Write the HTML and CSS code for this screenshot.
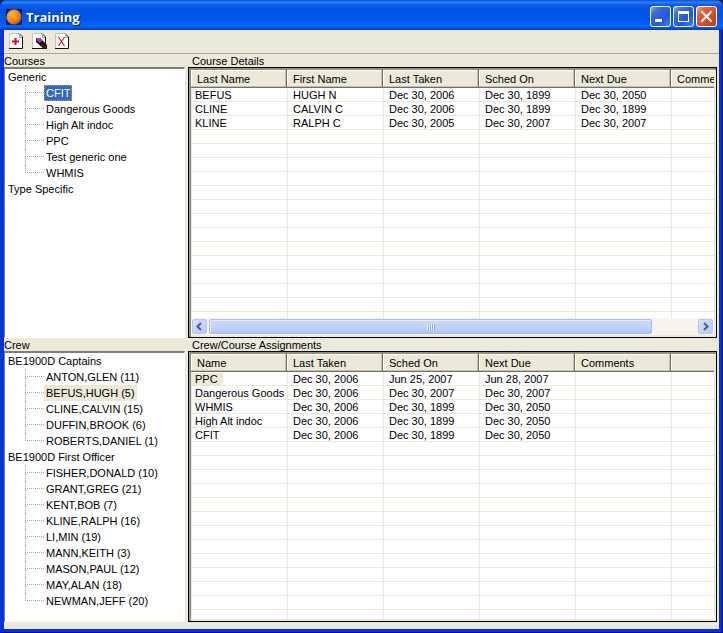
FILE: index.html
```html
<!DOCTYPE html>
<html lang="en">
<head>
    <meta charset="UTF-8">
    <meta name="viewport" content="width=device-width, initial-scale=1.0">
    <title>Training</title>
    <link rel="stylesheet" href="styles.css">
</head>
<body>
    <div class="window">
        <header class="titlebar">
            <svg class="app-icon" width="16" height="16" viewBox="0 0 16 16">
                <defs>
                    <radialGradient id="sun" cx="0.35" cy="0.35" r="0.7">
                        <stop offset="0" stop-color="#ffb92e"/>
                        <stop offset="0.6" stop-color="#f58a12"/>
                        <stop offset="1" stop-color="#c8500a"/>
                    </radialGradient>
                </defs>
                <rect width="16" height="16" fill="#0a1a86"/>
                <circle cx="8" cy="8" r="7.500" fill="url(#sun)"/>
            </svg>
            <h1>Training</h1>
            <div class="window-buttons">
                <button type="button" class="win-btn" aria-label="Minimize">
                    <svg width="19" height="19" viewBox="0 0 19 19"><rect x="4" y="12" width="7" height="3" fill="#fff"/></svg>
                </button>
                <button type="button" class="win-btn" aria-label="Maximize">
                    <svg width="19" height="19" viewBox="0 0 19 19"><path d="M4 4h11v11H4zM5 7v7h9V7z" fill="#fff" fill-rule="evenodd"/></svg>
                </button>
                <button type="button" class="win-btn close" aria-label="Close">
                    <svg width="19" height="19" viewBox="0 0 19 19"><path d="M5 5l9 9M14 5l-9 9" stroke="#fff" stroke-width="2" stroke-linecap="square"/></svg>
                </button>
            </div>
        </header>

        <div class="client">
            <div class="toolbar">
                <button type="button" class="tool" aria-label="Add">
                    <svg width="15" height="17" viewBox="0 0 15 17">
                        <path d="M0 0h10l4 4v12H0z" fill="#fff"/>
                        <path d="M0.500 16V0.500H10" fill="none" stroke="#c8c5b6"/>
                        <path d="M10 0.500L13.500 4V15.500H0" fill="none" stroke="#111"/>
                        <path d="M10.500 1v3.500H13" fill="none" stroke="#aca899"/>
                        <path d="M6.500 5v7M3 8.500h7" stroke="#e01010" stroke-width="2"/>
                    </svg>
                </button>
                <button type="button" class="tool" aria-label="Edit">
                    <svg width="15" height="17" viewBox="0 0 15 17">
                        <path d="M0 0h10l4 4v12H0z" fill="#fff"/>
                        <path d="M0.500 16V0.500H10" fill="none" stroke="#c8c5b6"/>
                        <path d="M10 0.500L13.500 4V15.500H0" fill="none" stroke="#111"/>
                        <path d="M10.500 1v3.500H13" fill="none" stroke="#aca899"/>
                        <path d="M4 5h4l7 7v4h-3L4 9z" fill="#220c10"/>
                        <path d="M5 5h3l2 2-2 3-4-3z" fill="#a838c8"/>
                        <path d="M9 10l5 5" stroke="#7c2a20"/>
                    </svg>
                </button>
                <button type="button" class="tool" aria-label="Delete">
                    <svg width="15" height="17" viewBox="0 0 15 17">
                        <path d="M0 0h10l4 4v12H0z" fill="#fff"/>
                        <path d="M0.500 16V0.500H10" fill="none" stroke="#c8c5b6"/>
                        <path d="M10 0.500L13.500 4V15.500H0" fill="none" stroke="#111"/>
                        <path d="M10.500 1v3.500H13" fill="none" stroke="#aca899"/>
                        <path d="M3.500 4l6 9M9.500 4l-6 9" stroke="#d82020" stroke-width="1.200"/>
                    </svg>
                </button>
            </div>

            <main class="panes">
                <section class="pane">
                    <h2>Courses</h2>
                    <div class="tree-box">
                        <ul class="tree">
                            <li>Generic
                                <ul>
                                    <li><span class="selected">CFIT</span></li>
                                    <li><span>Dangerous Goods</span></li>
                                    <li><span>High Alt indoc</span></li>
                                    <li><span>PPC</span></li>
                                    <li><span>Test generic one</span></li>
                                    <li><span>WHMIS</span></li>
                                </ul>
                            </li>
                            <li>Type Specific</li>
                        </ul>
                    </div>
                </section>

                <section class="pane detail">
                    <h2>Course Details</h2>
                    <div class="list-box">
                        <div class="list">
                            <table>
                                <thead>
                                    <tr><th>Last Name</th><th>First Name</th><th>Last Taken</th><th>Sched On</th><th>Next Due</th><th>Comments</th></tr>
                                </thead>
                                <tbody>
                                    <tr><td>BEFUS</td><td>HUGH N</td><td>Dec 30, 2006</td><td>Dec 30, 1899</td><td>Dec 30, 2050</td><td></td></tr>
                                    <tr><td>CLINE</td><td>CALVIN C</td><td>Dec 30, 2006</td><td>Dec 30, 1899</td><td>Dec 30, 1899</td><td></td></tr>
                                    <tr><td>KLINE</td><td>RALPH C</td><td>Dec 30, 2005</td><td>Dec 30, 2007</td><td>Dec 30, 2007</td><td></td></tr>
                                </tbody>
                            </table>
                        </div>
                        <div class="scrollbar">
                            <button type="button" class="arrow" aria-label="Scroll left">
                                <svg width="13" height="13" viewBox="0 0 13 13"><path d="M8 3L4.500 6.500 8 10" fill="none" stroke="#4d6185" stroke-width="2"/></svg>
                            </button>
                            <div class="track">
                                <div class="thumb"><i class="grip"></i></div>
                            </div>
                            <button type="button" class="arrow" aria-label="Scroll right">
                                <svg width="13" height="13" viewBox="0 0 13 13"><path d="M5 3l3.500 3.500L5 10" fill="none" stroke="#4d6185" stroke-width="2"/></svg>
                            </button>
                        </div>
                    </div>
                </section>

                <section class="pane">
                    <h2>Crew</h2>
                    <div class="tree-box">
                        <ul class="tree">
                            <li>BE1900D Captains
                                <ul>
                                    <li><span>ANTON,GLEN (11)</span></li>
                                    <li><span class="inactive">BEFUS,HUGH (5)</span></li>
                                    <li><span>CLINE,CALVIN (15)</span></li>
                                    <li><span>DUFFIN,BROOK (6)</span></li>
                                    <li><span>ROBERTS,DANIEL (1)</span></li>
                                </ul>
                            </li>
                            <li>BE1900D First Officer
                                <ul>
                                    <li><span>FISHER,DONALD (10)</span></li>
                                    <li><span>GRANT,GREG (21)</span></li>
                                    <li><span>KENT,BOB (7)</span></li>
                                    <li><span>KLINE,RALPH (16)</span></li>
                                    <li><span>LI,MIN (19)</span></li>
                                    <li><span>MANN,KEITH (3)</span></li>
                                    <li><span>MASON,PAUL (12)</span></li>
                                    <li><span>MAY,ALAN (18)</span></li>
                                    <li><span>NEWMAN,JEFF (20)</span></li>
                                </ul>
                            </li>
                        </ul>
                    </div>
                </section>

                <section class="pane detail">
                    <h2>Crew/Course Assignments</h2>
                    <div class="list-box">
                        <div class="list">
                            <table>
                                <thead>
                                    <tr><th>Name</th><th>Last Taken</th><th>Sched On</th><th>Next Due</th><th>Comments</th><th></th></tr>
                                </thead>
                                <tbody>
                                    <tr><td><span class="inactive">PPC</span></td><td>Dec 30, 2006</td><td>Jun 25, 2007</td><td>Jun 28, 2007</td><td></td><td></td></tr>
                                    <tr><td>Dangerous Goods</td><td>Dec 30, 2006</td><td>Dec 30, 2007</td><td>Dec 30, 2007</td><td></td><td></td></tr>
                                    <tr><td>WHMIS</td><td>Dec 30, 2006</td><td>Dec 30, 1899</td><td>Dec 30, 2050</td><td></td><td></td></tr>
                                    <tr><td>High Alt indoc</td><td>Dec 30, 2006</td><td>Dec 30, 1899</td><td>Dec 30, 2050</td><td></td><td></td></tr>
                                    <tr><td>CFIT</td><td>Dec 30, 2006</td><td>Dec 30, 1899</td><td>Dec 30, 2050</td><td></td><td></td></tr>
                                </tbody>
                            </table>
                        </div>
                    </div>
                </section>
            </main>
        </div>
    </div>
</body>
</html>
```

FILE: styles.css
```css
* {
    margin: 0;
    padding: 0;
    box-sizing: border-box;
}

body {
    font-family: "MS Sans Serif", "Liberation Sans", Arial, sans-serif;
    font-size: 11px;
    color: #000;
    background: #0a246a;
}

button {
    border: none;
    background: none;
    font: inherit;
}

svg {
    display: block;
}

.window {
    display: flex;
    flex-direction: column;
    min-height: 100vh;
    background: #0831d9;
    border-radius: 7px 7px 0 0;
    box-shadow: inset -1px -1px 0 #00138c;
    overflow: hidden;
}

/* title bar */
.titlebar {
    display: flex;
    align-items: center;
    gap: 4px;
    height: 30px;
    padding: 3px 6px 0 6px;
    background: linear-gradient(180deg, #0a4ad0 0%, #2a84f8 7%, #0a5ae8 17%, #0052e0 35%, #0058ee 65%, #0066ff 88%, #0050d8 95%, #0038b8 100%);
}

.titlebar h1 {
    flex: 1;
    font-family: "Trebuchet MS", "Open Sans", sans-serif;
    font-size: 13px;
    font-weight: bold;
    color: #fff;
    text-shadow: 1px 1px 1px #0a1883;
}

.window-buttons {
    display: flex;
    gap: 2px;
}

.win-btn {
    width: 21px;
    height: 21px;
    border: 1px solid #fff;
    border-radius: 3px;
    background: linear-gradient(135deg, #88a8f4 0%, #3c68e4 25%, #2456dc 65%, #3c80f4 100%);
}

.win-btn.close {
    background: linear-gradient(135deg, #f0a890 0%, #e46038 25%, #d84820 65%, #c03c18 100%);
}

/* client area */
.client {
    flex: 1;
    display: flex;
    flex-direction: column;
    margin: 0 4px 4px;
    padding-bottom: 7px;
    background: #ece9d8;
}

.toolbar {
    display: flex;
    align-items: center;
    gap: 8px;
    height: 24px;
    padding: 0 5px;
    border-bottom: 1px solid #aca899;
}

.panes {
    flex: 1;
    display: grid;
    grid-template-columns: 181px 1fr;
    grid-template-rows: 1fr 1fr;
    column-gap: 3px;
    padding-right: 2px;
}

.pane {
    display: flex;
    flex-direction: column;
    min-width: 0;
}

.pane h2 {
    height: 13px;
    line-height: 14px;
    font-size: 11px;
    font-weight: normal;
}

.detail h2 {
    padding-left: 4px;
}

/* trees */
.tree-box {
    flex: 1;
    padding: 0 2px;
    background: #fff;
    border: 1px solid #fff;
    border-top: 2px solid #817f74;
    border-left-color: #817f74;
}

.tree,
.tree ul {
    list-style: none;
}

.tree li {
    padding-left: 1px;
    line-height: 16px;
    white-space: nowrap;
}

.tree ul {
    padding-left: 17px;
}

.tree ul li {
    display: grid;
    grid-template-columns: 19px 1fr;
    grid-template-rows: 8px 8px;
    padding-left: 0;
}

.tree ul li::before,
.tree ul li::after {
    content: "";
    grid-column: 1;
    border-left: 1px dotted #a8a8a8;
}

.tree ul li::before {
    grid-row: 1;
    border-bottom: 1px dotted #a8a8a8;
}

.tree ul li::after {
    grid-row: 2;
}

.tree ul li:last-child::after {
    border-left: none;
}

.tree ul span {
    grid-column: 2;
    grid-row: 1 / 3;
    justify-self: start;
    padding: 0 2px;
}

.tree ul .selected {
    background: #316ac5;
    color: #fff;
    outline: 1px dotted #ce953a;
    outline-offset: -1px;
}

.inactive {
    background: #ece9d8;
}

/* report lists */
.list-box {
    flex: 1;
    display: flex;
    flex-direction: column;
    padding: 2px;
    border: 1px solid #000;
    background: #ece9d8;
    box-shadow: inset 2px 2px 0 #918f82;
}

/* empty rows are part of the grid pattern */
.list {
    flex: 1;
    overflow: hidden;
    background-color: #fff;
    background-image:
        linear-gradient(90deg, transparent 95px, #ece9d8 95px),
        linear-gradient(180deg, transparent 13px, #ece9d8 13px);
    background-size: 96px 14px;
    background-position: 1px 4px;
}

.list table {
    width: 576px;
    table-layout: fixed;
    border-collapse: collapse;
}

.list th {
    height: 18px;
    padding: 0 6px;
    font-weight: normal;
    text-align: left;
    background: #ece9d8;
    box-shadow: inset -1px -1px 0 #716f64, inset -2px -2px 0 #c5c2b4, inset 1px 1px 0 #fff;
}

.list td {
    height: 14px;
    padding: 0 6px;
    line-height: 13px;
    white-space: nowrap;
}

.list td:first-child {
    padding: 0 4px;
}

.list .inactive {
    display: inline-block;
    margin-left: -4px;
    padding: 0 5px 0 4px;
}

/* scrollbar */
.scrollbar {
    display: flex;
    gap: 2px;
    height: 17px;
    padding: 1px;
    background: #f5f4ee;
}

.arrow {
    width: 15px;
    height: 15px;
    border: 1px solid #b4c8f6;
    border-radius: 2px;
    background: linear-gradient(135deg, #d6e2fe, #b4c8f6);
}

.track {
    flex: 1;
}

.thumb {
    display: flex;
    align-items: center;
    justify-content: center;
    width: 91%;
    height: 15px;
    border: 1px solid #a8bcec;
    border-radius: 2px;
    background: linear-gradient(180deg, #cad8fd, #bcd0fc 70%, #b0c4f4);
    box-shadow: inset 1px 1px 0 #e6eeff;
}

.grip {
    width: 8px;
    height: 6px;
    background: repeating-linear-gradient(90deg, #eef4fe 0 1px, #8cb0f8 1px 2px);
}
```
